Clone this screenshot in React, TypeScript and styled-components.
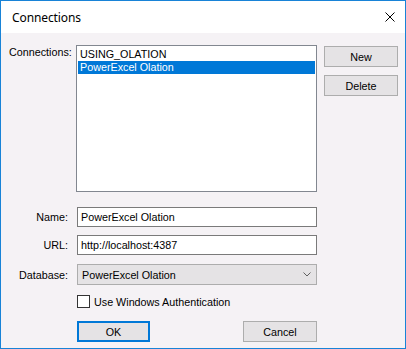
import React from "react";
import styled, { createGlobalStyle } from "styled-components";

const Global = createGlobalStyle`
  html, body { margin: 0; padding: 0; background: #ffffff; }
  * { box-sizing: border-box; }
`;

const Window = styled.div`
  width: 406px;
  height: 349px;
  border: 1px solid #1883d7;
  display: flex;
  flex-direction: column;
  background: #f5f2f5;
  font-family: "Liberation Sans", Arial, sans-serif;
  font-size: 10.75px;
  color: #000;
`;

const TitleBar = styled.div`
  height: 32px;
  flex: none;
  background: #ffffff;
  display: flex;
  align-items: center;
  justify-content: space-between;
  padding: 0 10px 0 11px;
`;

const Title = styled.span`
  font-family: "Noto Sans", "Segoe UI", sans-serif;
  font-size: 12px;
  letter-spacing: -0.1px;
`;

const CloseIcon = styled.svg`
  width: 10px;
  height: 10px;
  display: block;
`;

const Body = styled.div`
  flex: 1;
  padding: 12px 7px 0 7px;
  display: flex;
  flex-direction: column;
`;

const TopSection = styled.div`
  display: grid;
  grid-template-columns: 61px 241px 74px;
  column-gap: 7px;
  align-items: start;
`;

const TopLabel = styled.label`
  padding-left: 1px;
  line-height: 13px;
  padding-top: 1px;
  white-space: nowrap;
`;

const ListBox = styled.div`
  height: 147px;
  border: 1px solid #828790;
  background: #ffffff;
  padding: 2px 1px;
  display: flex;
  flex-direction: column;
`;

const ListItem = styled.div<{ $selected?: boolean }>`
  height: 13px;
  line-height: 13px;
  padding-left: 2px;
  white-space: nowrap;
  background: ${(p) => (p.$selected ? "#0078d7" : "transparent")};
  color: ${(p) => (p.$selected ? "#ffffff" : "#000000")};
`;

const SideButtons = styled.div`
  display: flex;
  flex-direction: column;
  gap: 8px;
  padding-top: 1px;
`;

const Button = styled.button<{ $default?: boolean; $w?: number }>`
  height: 21px;
  width: ${(p) => (p.$w ? `${p.$w}px` : "100%")};
  background: #e5e3e5;
  border: ${(p) => (p.$default ? "2px solid #0078d7" : "1px solid #adadad")};
  font-family: "Liberation Sans", Arial, sans-serif;
  font-size: 10.75px;
  color: #000;
  padding: 0;
  margin: 0;
  display: flex;
  align-items: center;
  justify-content: center;
`;

const Form = styled.div`
  display: grid;
  grid-template-columns: 61px 240px;
  column-gap: 8px;
  margin-top: 15px;
`;

const FieldLabel = styled.label<{ $mt?: number; $h: number }>`
  margin-top: ${(p) => p.$mt ?? 0}px;
  height: ${(p) => p.$h}px;
  display: flex;
  align-items: center;
  justify-content: flex-end;
  padding-right: 1px;
`;

const Cell = styled.div<{ $mt?: number }>`
  margin-top: ${(p) => p.$mt ?? 0}px;
`;

const TextInput = styled.div`
  height: 20px;
  border: 1px solid #7a7a7a;
  background: #ffffff;
  display: flex;
  align-items: center;
  padding-left: 3px;
  white-space: nowrap;
`;

const Select = styled.div`
  height: 21px;
  border: 1px solid #adadad;
  background: #e5e3e5;
  display: flex;
  align-items: center;
  justify-content: space-between;
  padding: 0 5px 0 4px;
`;

const Chevron = styled.svg`
  width: 8px;
  height: 5px;
  display: block;
`;

const CheckRow = styled.div`
  display: flex;
  align-items: center;
  gap: 4px;
  height: 13px;
`;

const CheckBox = styled.span`
  width: 13px;
  height: 13px;
  border: 1px solid #333333;
  background: #ffffff;
  flex: none;
`;

const ButtonRow = styled.div`
  display: flex;
  justify-content: space-between;
`;

export default function App() {
  return (
    <>
      <Global />
      <Window>
        <TitleBar>
          <Title>Connections</Title>
          <CloseIcon viewBox="0 0 10 10">
            <path d="M0.5 0.5 L9.5 9.5 M9.5 0.5 L0.5 9.5" stroke="#000" strokeWidth="1" fill="none" />
          </CloseIcon>
        </TitleBar>
        <Body>
          <TopSection>
            <TopLabel>Connections:</TopLabel>
            <ListBox>
              <ListItem>USING_OLATION</ListItem>
              <ListItem $selected>PowerExcel Olation</ListItem>
            </ListBox>
            <SideButtons>
              <Button>New</Button>
              <Button>Delete</Button>
            </SideButtons>
          </TopSection>
          <Form>
            <FieldLabel $h={20}>Name:</FieldLabel>
            <Cell>
              <TextInput>PowerExcel Olation</TextInput>
            </Cell>
            <FieldLabel $mt={8} $h={20}>URL:</FieldLabel>
            <Cell $mt={8}>
              <TextInput>http://localhost:4387</TextInput>
            </Cell>
            <FieldLabel $mt={9} $h={21}>Database:</FieldLabel>
            <Cell $mt={9}>
              <Select>
                <span>PowerExcel Olation</span>
                <Chevron viewBox="0 0 8 5">
                  <path d="M0.5 0.5 L4 4 L7.5 0.5" stroke="#606060" strokeWidth="1" fill="none" />
                </Chevron>
              </Select>
            </Cell>
            <span />
            <Cell $mt={10}>
              <CheckRow>
                <CheckBox />
                <span>Use Windows Authentication</span>
              </CheckRow>
            </Cell>
            <span />
            <Cell $mt={13}>
              <ButtonRow>
                <Button $default $w={73}>OK</Button>
                <Button $w={74}>Cancel</Button>
              </ButtonRow>
            </Cell>
          </Form>
        </Body>
      </Window>
    </>
  );
}
